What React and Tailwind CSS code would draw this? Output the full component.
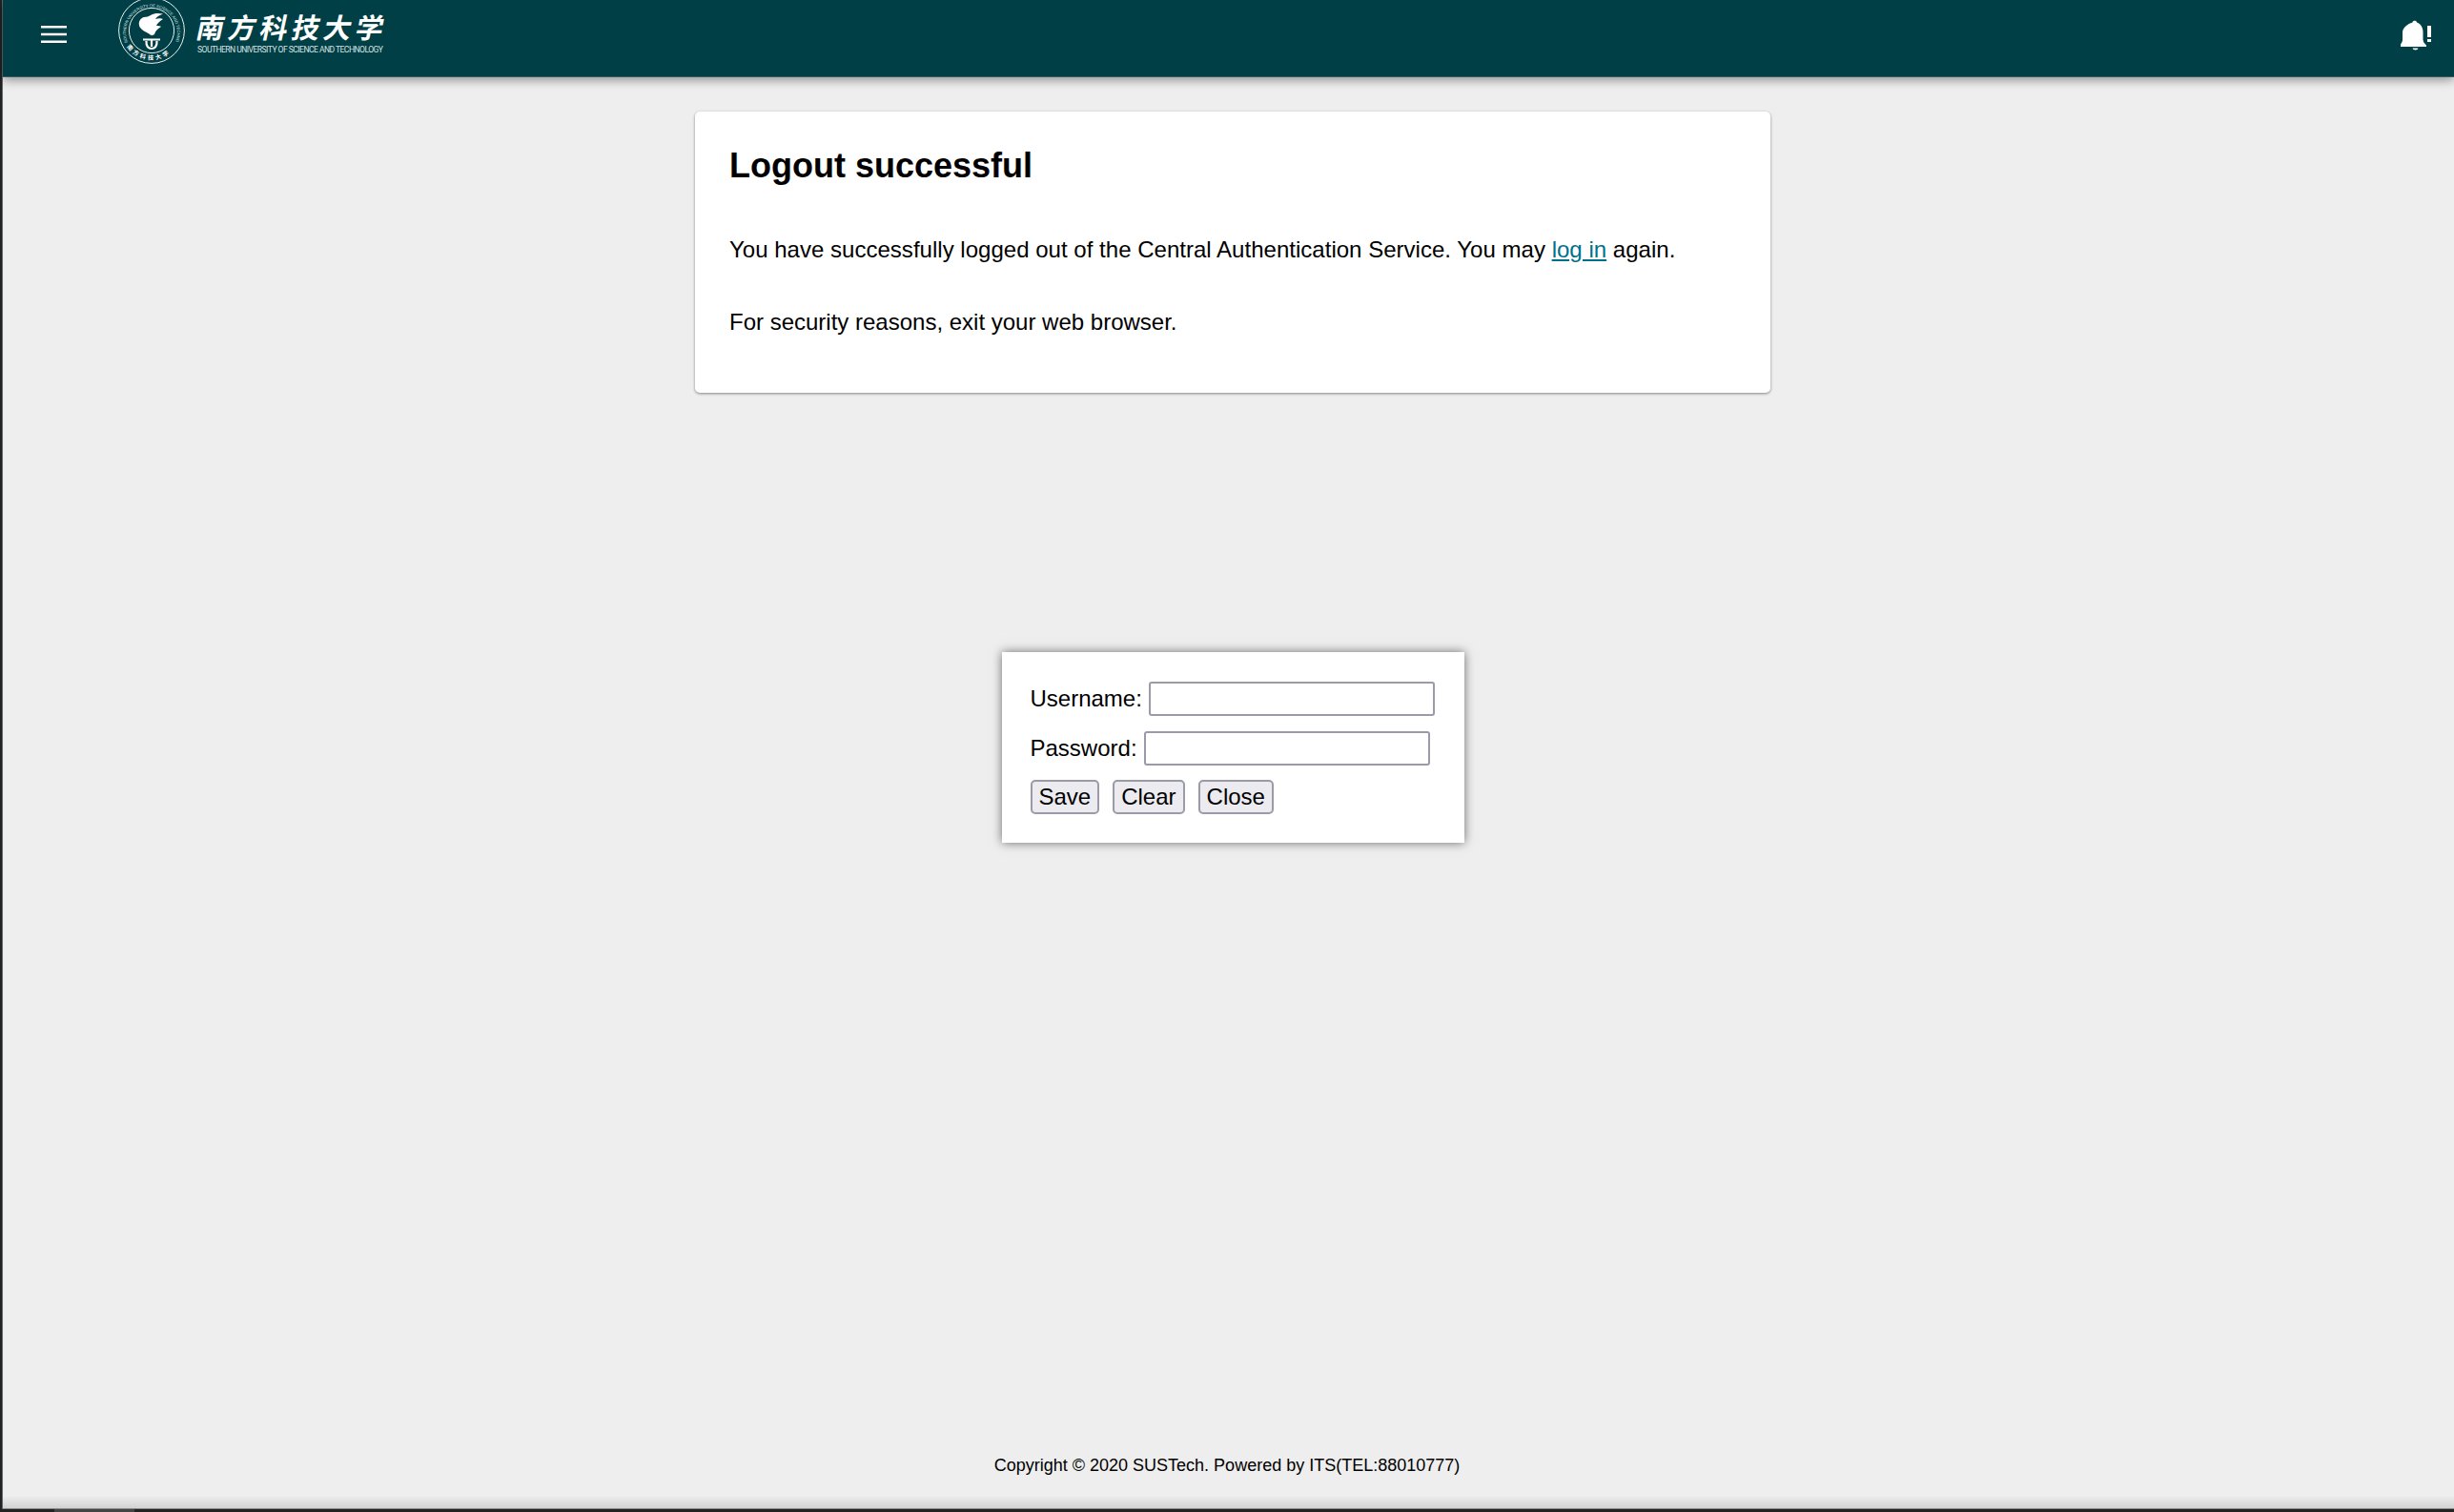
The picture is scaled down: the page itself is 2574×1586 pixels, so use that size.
export default function App() {
  const sans = "font-['Liberation_Sans',Arial,sans-serif]";
  return (
    <div className={`${sans} h-[1586px] w-[2574px] overflow-hidden flex flex-col bg-[#222] text-black`}>
      <div className="flex-1 min-h-0 ml-[2px] flex flex-col bg-[#eeeeee] border-l border-[#5d6a70] relative">
        <header className="h-[81px] shrink-0 bg-[#003f45] flex items-center justify-between shadow-[0_3px_10px_rgba(0,0,0,0.4)] border-b border-[#2f5a5e]">
          <div className="flex items-center h-full">
            <svg width="28" height="20" viewBox="0 0 28 20" className="ml-[40px] -mt-[7px]">
              <path d="M0 1.2H27M0 9H27M0 16.8H27" stroke="#fff" strokeWidth="2.6" />
            </svg>
            <svg width="72" height="72" viewBox="0 0 72 72" className="ml-[52px] -mt-[16px]">
              <defs>
                <path id="sealArc" d="M11 48.5A27 27 0 1 1 61 48.5" />
                <path id="sealBottom" d="M10 53A31.5 31.5 0 0 0 62 53" />
              </defs>
              <circle cx="36" cy="36" r="34.4" fill="none" stroke="#e8f0f0" strokeWidth="1" />
              <circle cx="36" cy="36" r="23.6" fill="none" stroke="#e8f0f0" strokeWidth="1" />
              <text fill="#d8e6e6" fontSize="4.2" fontFamily="Liberation Sans, sans-serif" textLength="116" lengthAdjust="spacingAndGlyphs">
                <textPath href="#sealArc">SOUTHERN UNIVERSITY OF SCIENCE AND TECHNOLOGY</textPath>
              </text>
              <text fill="#fff" fontSize="6.2" fontWeight="700" fontFamily="Noto Sans CJK SC, sans-serif" letterSpacing="2.6">
                <textPath href="#sealBottom">南方科技大学</textPath>
              </text>
              <path d="M35 20C40 17 44 18 48 18.5C44 20 41 22 40 24C43 23 46 23 48 24C45 26 42 28 41 31C43 31 45 31 46 32C43 34 40 36 39 40C37 41 36 42 34 40C32 38 27 37 24 33C21 28 24 23 28 22C31 22 33 21 35 20Z" fill="#fff" />
              <path d="M27 45.5H45M30.5 47C30 53 33 55 36 55C39 55 42 53 41.5 47M36 45V53" stroke="#fff" strokeWidth="2.2" fill="none" />
            </svg>
            <div className="ml-[12px] -mt-[16px] w-[200px] flex flex-col">
              <div className="font-['Noto_Sans_CJK_SC',sans-serif] font-bold text-white text-[29px] leading-[38px] tracking-[4.4px] whitespace-nowrap -skew-x-12">南方科技大学</div>
              <div className="font-['Roboto',sans-serif] text-[#d5e2e2] text-[8.6px] leading-[10px] mt-[1px] whitespace-nowrap tracking-[-0.56px]">SOUTHERN UNIVERSITY OF SCIENCE AND TECHNOLOGY</div>
            </div>
          </div>
          <svg width="34" height="36" viewBox="0 0 34 36" className="mr-[22px] -mt-[4px]">
            <path d="M14.5 3.5C14.5 1 19 1 19 3.5C23.5 5 25.5 9 25.5 14V21.5C25.5 24 27.5 26 29 27.5V29H1V27.5C2.5 26 4 24 4 21.5V14C4 9 9.5 5 14.5 3.5Z" fill="#fff" transform="translate(-2 0)" />
            <path d="M11.5 30.5H17.5C17 33 12 33 11.5 30.5Z" fill="#fff" transform="translate(1 0)" />
            <path d="M28 7H32V19H28ZM28 21H32V24H28Z" fill="#fff" />
          </svg>
        </header>
        <main className="flex-1 min-h-0 flex flex-col items-center pl-[9px]">
          <section className="mt-[36px] w-[1128px] h-[295px] bg-white rounded-[5px] shadow-[0_1px_3px_rgba(0,0,0,0.45)] px-[36px] pt-[32px]">
            <h1 className="text-[36px] leading-[50px] font-bold">Logout successful</h1>
            <p className="mt-[45px] text-[24px] leading-[36px] tracking-[0.02px]">
              You have successfully logged out of the Central Authentication Service. You may{" "}
              <a className="text-[#00718a] underline" href="#login">log in</a> again.
            </p>
            <p className="mt-[40px] text-[24px] leading-[36px]">For security reasons, exit your web browser.</p>
          </section>
          <form className="mt-[272px] w-[485px] h-[200px] bg-white shadow-[0_0_10px_rgba(0,0,0,0.55)] pl-[30px] pt-[31px] text-[24px] leading-[28px] flex flex-col">
            <label className="flex items-center h-[36px]">
              Username:
              <input className="ml-[7px] w-[300px] h-[36px] bg-white border-2 border-[#9b9aa8] rounded-[3px]" />
            </label>
            <label className="flex items-center h-[36px] mt-[16px]">
              Password:
              <input className="ml-[7px] w-[300px] h-[36px] bg-white border-2 border-[#9b9aa8] rounded-[3px]" />
            </label>
            <div className="flex mt-[15px] gap-[14px]">
              <button type="button" className="h-[36px] px-[7px] bg-[#ebebf0] border-2 border-[#9b9aa8] rounded-[5px]">Save</button>
              <button type="button" className="h-[36px] px-[7px] bg-[#ebebf0] border-2 border-[#9b9aa8] rounded-[5px]">Clear</button>
              <button type="button" className="h-[36px] px-[7px] bg-[#ebebf0] border-2 border-[#9b9aa8] rounded-[5px]">Close</button>
            </div>
          </form>
          <div className="flex-1" />
          <footer className="h-[44px] -ml-[12px] text-[18px] leading-[24px]">Copyright © 2020 SUSTech. Powered by ITS(TEL:88010777)</footer>
          <div className="h-[14px] w-[2580px] bg-gradient-to-b from-[#eeeeee] to-[#d2d2d2] shrink-0 border-b border-[#8a8a8a]" />
        </main>
      </div>
      <div className="h-[3px] shrink-0 flex">
        <div className="ml-[57px] w-[84px] bg-[#444]" />
      </div>
    </div>
  );
}
